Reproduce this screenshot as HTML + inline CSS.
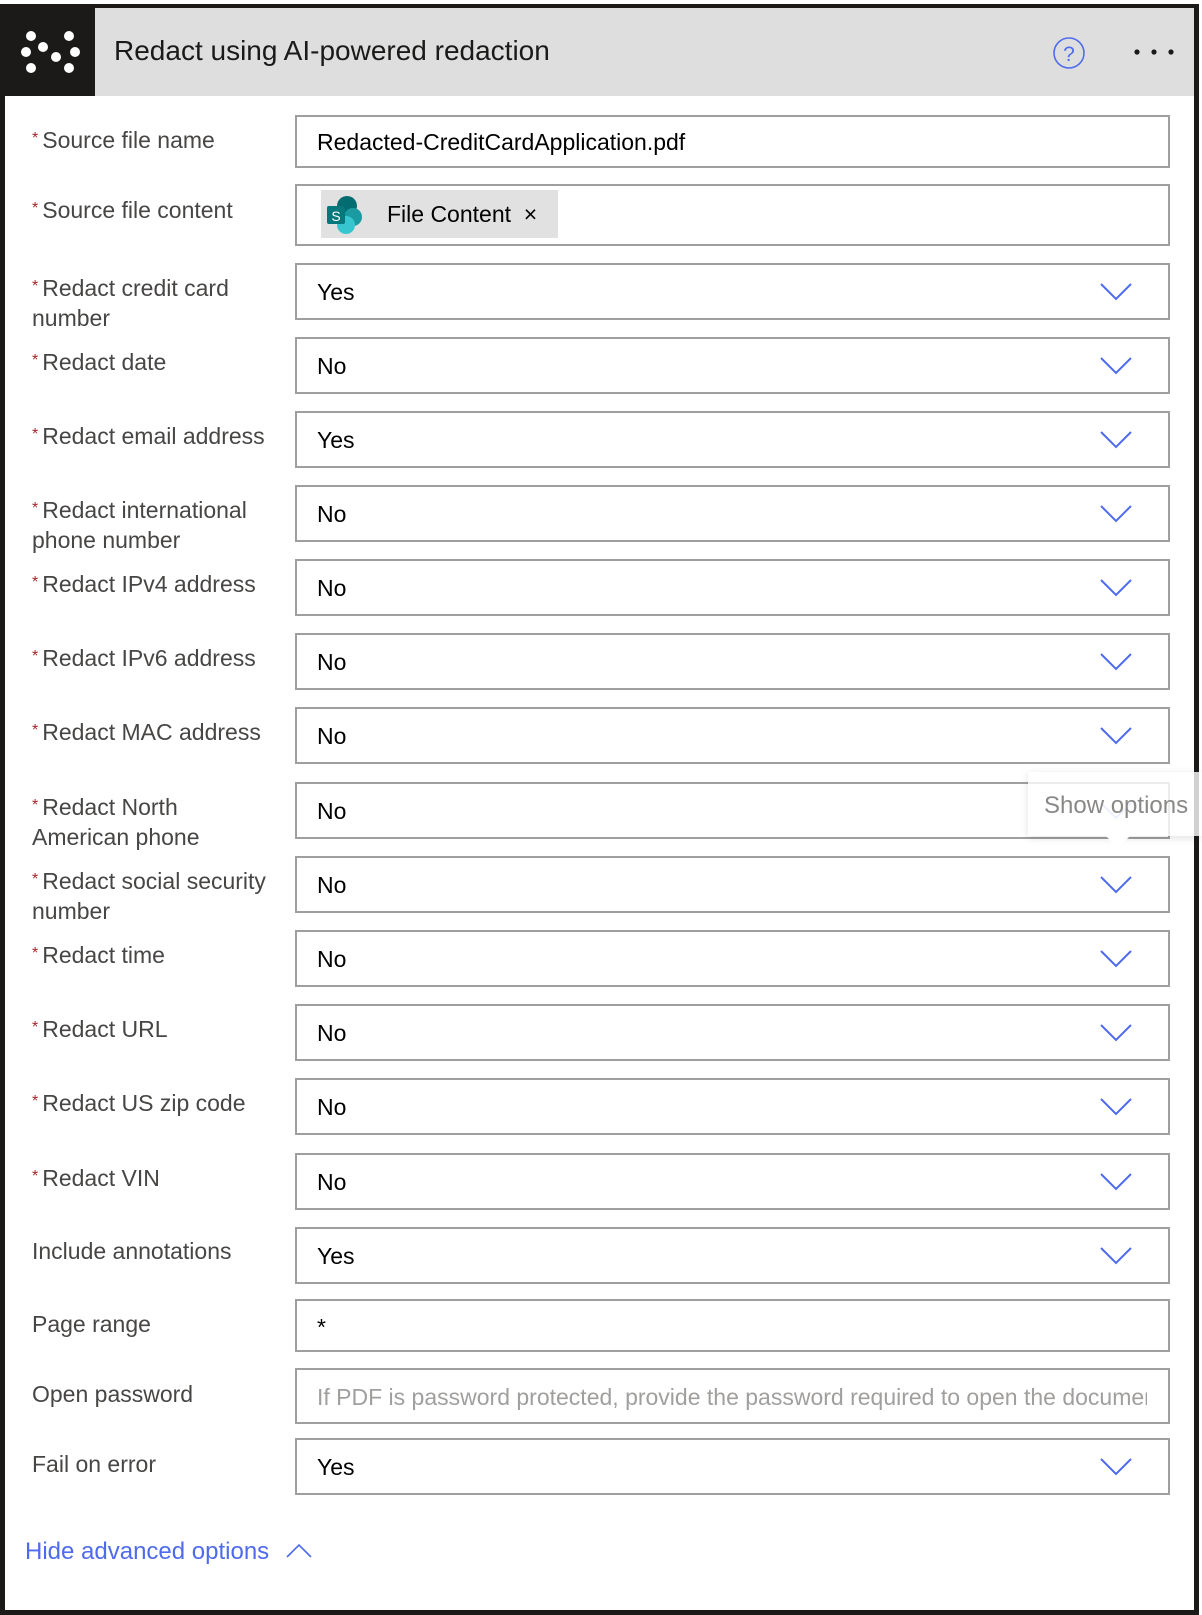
<!DOCTYPE html>
<html><head><meta charset="utf-8"><style>
*{margin:0;padding:0;box-sizing:border-box}
body{width:1202px;height:1615px;background:#fff;position:relative;overflow:hidden;font-family:"Liberation Sans",sans-serif}
.frame{position:absolute;left:0;top:4px;width:1199px;height:1611px;border:5px solid #1b1a19;border-top-width:4px}
.hdr{position:absolute;left:5px;top:8px;width:1189px;height:88px;background:#dedede}
.logo{position:absolute;left:0;top:8px;width:95px;height:88px;background:#1b1a19}
.title{position:absolute;left:114px;top:35px;font-size:28px;color:#1b1a19}
.lbl{position:absolute;left:32px;font-size:23px;color:#484644;line-height:30px;width:248px}
.lbl b{color:#a4262c;font-weight:normal;font-size:16px;vertical-align:5px;margin-right:4px}
.box{position:absolute;left:295px;width:875px;border:2px solid #a19f9d;background:#fff}
.val{position:absolute;left:20px;font-size:23px;color:#000}
.chev{position:absolute;right:36px;width:32px;height:18px}
</style></head><body>
<div class="frame"></div>
<div class="hdr"></div>
<div class="logo"><svg width="95" height="88"><g fill="#fff"><circle cx="31" cy="28" r="5"/><circle cx="69" cy="28" r="5"/><circle cx="26" cy="44" r="5"/><circle cx="43" cy="39" r="5"/><circle cx="56" cy="49" r="5"/><circle cx="75" cy="44" r="5"/><circle cx="31" cy="60" r="5"/><circle cx="69" cy="60" r="5"/></g></svg></div>
<div class="title">Redact using AI-powered redaction</div>
<svg style="position:absolute;left:1052px;top:36px" width="34" height="34"><circle cx="17" cy="17" r="15" fill="none" stroke="#4f6bed" stroke-width="1.6"/><text x="17" y="25" font-size="21" text-anchor="middle" fill="#4f6bed" font-family="Liberation Sans">?</text></svg>
<svg style="position:absolute;left:1130px;top:46px" width="50" height="12"><g fill="#1b1a19"><circle cx="7" cy="6" r="2.6"/><circle cx="24" cy="6" r="2.6"/><circle cx="41" cy="6" r="2.6"/></g></svg>

<div class="lbl" style="top:124px"><b>*</b>Source file name</div>
<div class="box" style="top:115px;height:53px"><div class="val" style="top:12px">Redacted-CreditCardApplication.pdf</div></div>
<div class="lbl" style="top:194px"><b>*</b>Source file content</div>
<div class="box" style="top:184px;height:62px">
<div style="position:absolute;left:24px;top:4px;width:237px;height:48px;background:#e1e1e1">
<svg style="position:absolute;left:4px;top:4px" width="40" height="42"><circle cx="22" cy="12" r="10" fill="#036c70"/><circle cx="28" cy="23" r="9" fill="#1a9ba1"/><circle cx="21" cy="31" r="9" fill="#37c6d0"/><rect x="2" y="12" width="18" height="18" rx="2" fill="#03787c"/><text x="11" y="27" font-size="14" fill="#fff" text-anchor="middle" font-family="Liberation Sans">S</text></svg>
<div style="position:absolute;left:66px;top:11px;font-size:23px;color:#000">File Content&nbsp;&nbsp;×</div></div></div>

<div class="lbl" style="top:272px"><b>*</b>Redact credit card number</div>
<div class="box" style="top:263px;height:57px"><div class="val" style="top:14px">Yes</div><svg class="chev" style="top:18px" viewBox="0 0 32 18"><path d="M1 1L16 16L31 1" fill="none" stroke="#4f6bed" stroke-width="2"/></svg></div>
<div class="lbl" style="top:346px"><b>*</b>Redact date</div>
<div class="box" style="top:337px;height:57px"><div class="val" style="top:14px">No</div><svg class="chev" style="top:18px" viewBox="0 0 32 18"><path d="M1 1L16 16L31 1" fill="none" stroke="#4f6bed" stroke-width="2"/></svg></div>
<div class="lbl" style="top:420px"><b>*</b>Redact email address</div>
<div class="box" style="top:411px;height:57px"><div class="val" style="top:14px">Yes</div><svg class="chev" style="top:18px" viewBox="0 0 32 18"><path d="M1 1L16 16L31 1" fill="none" stroke="#4f6bed" stroke-width="2"/></svg></div>
<div class="lbl" style="top:494px"><b>*</b>Redact international phone number</div>
<div class="box" style="top:485px;height:57px"><div class="val" style="top:14px">No</div><svg class="chev" style="top:18px" viewBox="0 0 32 18"><path d="M1 1L16 16L31 1" fill="none" stroke="#4f6bed" stroke-width="2"/></svg></div>
<div class="lbl" style="top:568px"><b>*</b>Redact IPv4 address</div>
<div class="box" style="top:559px;height:57px"><div class="val" style="top:14px">No</div><svg class="chev" style="top:18px" viewBox="0 0 32 18"><path d="M1 1L16 16L31 1" fill="none" stroke="#4f6bed" stroke-width="2"/></svg></div>
<div class="lbl" style="top:642px"><b>*</b>Redact IPv6 address</div>
<div class="box" style="top:633px;height:57px"><div class="val" style="top:14px">No</div><svg class="chev" style="top:18px" viewBox="0 0 32 18"><path d="M1 1L16 16L31 1" fill="none" stroke="#4f6bed" stroke-width="2"/></svg></div>
<div class="lbl" style="top:716px"><b>*</b>Redact MAC address</div>
<div class="box" style="top:707px;height:57px"><div class="val" style="top:14px">No</div><svg class="chev" style="top:18px" viewBox="0 0 32 18"><path d="M1 1L16 16L31 1" fill="none" stroke="#4f6bed" stroke-width="2"/></svg></div>
<div class="lbl" style="top:791px;height:63px;overflow:hidden;width:200px"><b>*</b>Redact North American phone number</div>
<div class="box" style="top:782px;height:57px"><div class="val" style="top:14px">No</div><svg class="chev" style="top:18px;opacity:.5" viewBox="0 0 32 18"><path d="M1 1L16 16L31 1" fill="none" stroke="#4f6bed" stroke-width="2"/></svg></div>
<div class="lbl" style="top:865px"><b>*</b>Redact social security number</div>
<div class="box" style="top:856px;height:57px"><div class="val" style="top:14px">No</div><svg class="chev" style="top:18px" viewBox="0 0 32 18"><path d="M1 1L16 16L31 1" fill="none" stroke="#4f6bed" stroke-width="2"/></svg></div>
<div class="lbl" style="top:939px"><b>*</b>Redact time</div>
<div class="box" style="top:930px;height:57px"><div class="val" style="top:14px">No</div><svg class="chev" style="top:18px" viewBox="0 0 32 18"><path d="M1 1L16 16L31 1" fill="none" stroke="#4f6bed" stroke-width="2"/></svg></div>
<div class="lbl" style="top:1013px"><b>*</b>Redact URL</div>
<div class="box" style="top:1004px;height:57px"><div class="val" style="top:14px">No</div><svg class="chev" style="top:18px" viewBox="0 0 32 18"><path d="M1 1L16 16L31 1" fill="none" stroke="#4f6bed" stroke-width="2"/></svg></div>
<div class="lbl" style="top:1087px"><b>*</b>Redact US zip code</div>
<div class="box" style="top:1078px;height:57px"><div class="val" style="top:14px">No</div><svg class="chev" style="top:18px" viewBox="0 0 32 18"><path d="M1 1L16 16L31 1" fill="none" stroke="#4f6bed" stroke-width="2"/></svg></div>
<div class="lbl" style="top:1162px"><b>*</b>Redact VIN</div>
<div class="box" style="top:1153px;height:57px"><div class="val" style="top:14px">No</div><svg class="chev" style="top:18px" viewBox="0 0 32 18"><path d="M1 1L16 16L31 1" fill="none" stroke="#4f6bed" stroke-width="2"/></svg></div>
<div class="lbl" style="top:1236px">Include annotations</div>
<div class="box" style="top:1227px;height:57px"><div class="val" style="top:14px">Yes</div><svg class="chev" style="top:18px" viewBox="0 0 32 18"><path d="M1 1L16 16L31 1" fill="none" stroke="#4f6bed" stroke-width="2"/></svg></div>
<div class="lbl" style="top:1309px">Page range</div>
<div class="box" style="top:1299px;height:53px"><div class="val" style="top:13px">*</div></div>
<div class="lbl" style="top:1379px">Open password</div>
<div class="box" style="top:1368px;height:56px;overflow:hidden"><div class="val" style="top:14px;color:#a19f9d;white-space:nowrap;width:830px;overflow:hidden">If PDF is password protected, provide the password required to open the document</div></div>
<div class="lbl" style="top:1449px">Fail on error</div>
<div class="box" style="top:1438px;height:57px"><div class="val" style="top:14px">Yes</div><svg class="chev" style="top:18px" viewBox="0 0 32 18"><path d="M1 1L16 16L31 1" fill="none" stroke="#4f6bed" stroke-width="2"/></svg></div>

<div style="position:absolute;left:1028px;top:772px;width:174px;height:64px;background:rgba(255,255,255,.8);box-shadow:0 2px 8px rgba(0,0,0,.12)"></div>
<div style="position:absolute;left:1106px;top:836px;width:0;height:0;border-left:12px solid transparent;border-right:12px solid transparent;border-top:12px solid #fff"></div>
<div style="position:absolute;left:1044px;top:792px;font-size:24px;color:#8a8886">Show options</div>

<div style="position:absolute;left:25px;top:1538px;font-size:24px;color:#4f6bed">Hide advanced options</div>
<svg style="position:absolute;left:286px;top:1543px" width="26" height="16" viewBox="0 0 26 16"><path d="M1 14L13 2L25 14" fill="none" stroke="#4f6bed" stroke-width="1.6"/></svg>
</body></html>
